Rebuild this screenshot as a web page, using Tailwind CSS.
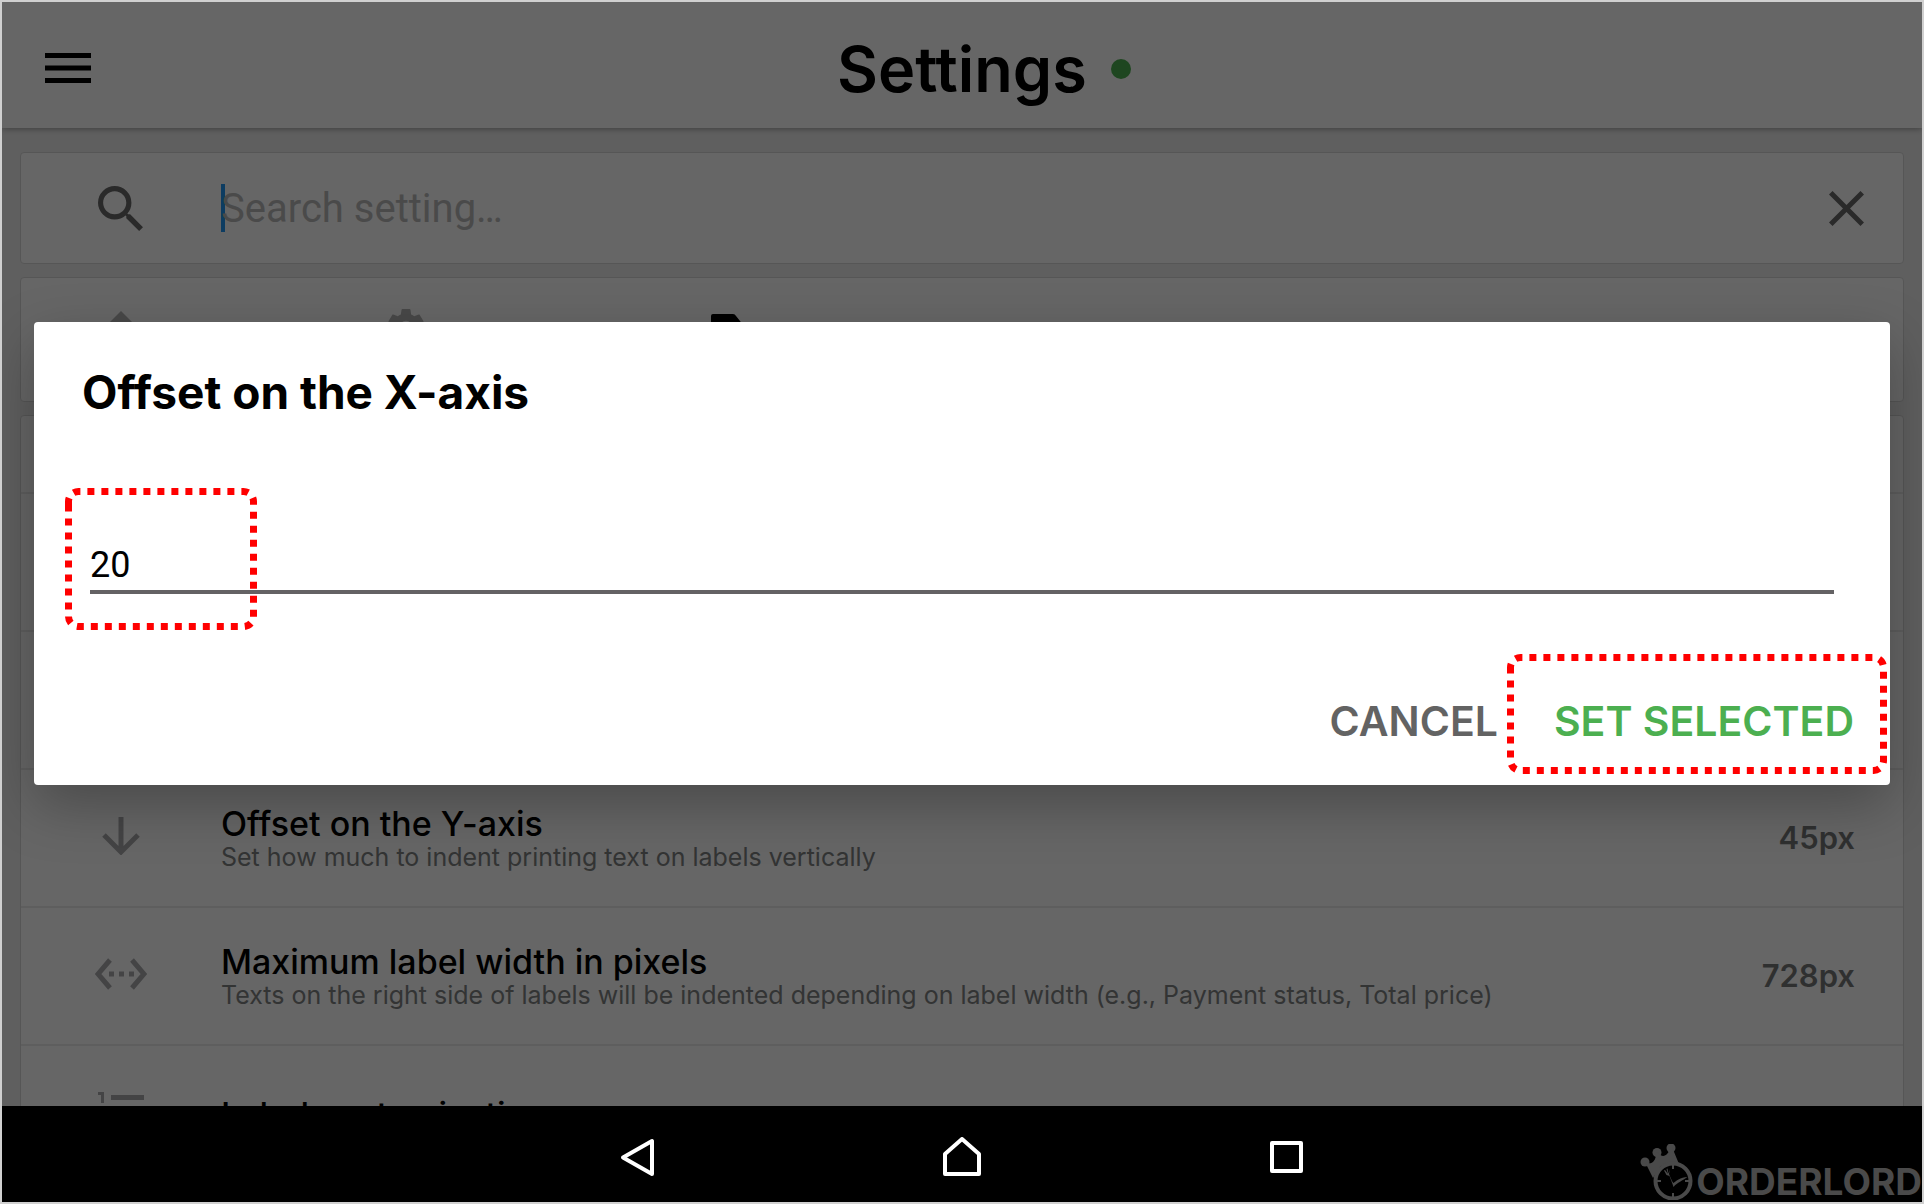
<!DOCTYPE html>
<html lang="en">
<head>
<meta charset="utf-8">
<meta name="viewport" content="width=device-width, initial-scale=1">
<title>Settings</title>
<script src="https://cdn.jsdelivr.net/npm/@tailwindcss/browser@4"></script>
</head>
<body class="font-['Inter',sans-serif]">
<div class="flex h-screen flex-col overflow-hidden border-2 border-[#d0d0d0] text-black">

  <!-- App screen with the dialog over it -->
  <div class="relative flex min-h-0 flex-1 flex-col overflow-hidden bg-[#eeeeee]">
    <header class="relative z-10 flex h-[126px] shrink-0 items-center justify-center bg-white shadow-[0_1px_6px_rgba(0,0,0,0.35)]">
      <button type="button" aria-label="Menu" class="absolute left-[43px] top-[51px]">
        <svg class="block h-[30px] w-[46px]" viewBox="0 0 46 30"><path d="M0 0h46v5H0zM0 12.500h46v5H0zM0 25h46v5H0z"/></svg>
      </button>
      <div class="flex items-center gap-6 pt-[7px] pl-11">
        <h1 class="text-[63px]/[72px] font-semibold">Settings</h1>
        <span class="size-5 rounded-full bg-[#4caf50]"></span>
      </div>
    </header>

    <main class="flex min-h-0 flex-1 flex-col gap-[13px] overflow-hidden px-[18px] pt-6">
      <label class="flex h-[112px] shrink-0 items-center rounded border border-[#d6d6d6] bg-white pr-[39px] pl-[77px]">
        <svg class="h-[45px] w-[45px] shrink-0" viewBox="3 3 17.500 17.500" fill="#696969"><path d="M15.500 14h-.79l-.28-.27A6.471 6.471 0 0 0 16 9.500 6.500 6.500 0 1 0 9.500 16c1.610 0 3.090-.59 4.230-1.570l.27.28v.79l5 4.990L20.490 19l-4.990-5zm-6 0C7.010 14 5 11.990 5 9.500S7.010 5 9.500 5 14 7.010 14 9.500 11.990 14 9.500 14z"/></svg>
        <span class="ml-[78px] h-12 w-1 shrink-0 bg-[#2196f3]"></span>
        <input type="text" aria-label="Search setting" placeholder="Search setting…" class="-ml-1 min-w-0 flex-1 pt-[2px] font-['Roboto',sans-serif] text-[40px]/[48px] placeholder:text-[#b9b9b9] focus:outline-none">
        <button type="button" aria-label="Clear"><svg class="block size-[35px]" viewBox="5 5 14 14" fill="#696969"><path d="M19 6.410 17.590 5 12 10.590 6.410 5 5 6.410 10.590 12 5 17.590 6.410 19 12 13.410 17.590 19 19 17.590 13.410 12z"/></svg></button>
      </label>

      <nav aria-label="Breadcrumb" class="flex h-[125px] shrink-0 items-start gap-[240px] rounded border border-[#d6d6d6] bg-white pt-7 pl-[73px]">
        <a href="#" aria-label="Home"><svg class="h-[60px] w-[54px]" viewBox="0 0 54 60" fill="#b4b4b4"><path d="M27 5 54 32H46V56H32V40H22V56H8V32H0z"/></svg></a>
        <a href="#" aria-label="General" class="pt-[3px]"><svg class="size-[36px]" viewBox="2 2 20 20" fill="#b4b4b4"><path d="M19.430 12.980c.04-.32.070-.64.070-.98s-.03-.66-.07-.98l2.110-1.650c.19-.15.240-.42.120-.64l-2-3.460c-.12-.22-.39-.3-.61-.22l-2.490 1c-.52-.4-1.080-.73-1.690-.98l-.38-2.650A.488.488 0 0 0 14 2h-4c-.25 0-.46.180-.49.420l-.38 2.650c-.61.250-1.170.590-1.690.980l-2.490-1c-.23-.09-.49 0-.61.220l-2 3.460c-.13.220-.07.490.120.640l2.110 1.650c-.04.320-.07.650-.07.980s.03.660.070.980l-2.110 1.650c-.19.150-.24.420-.12.640l2 3.460c.12.220.390.300.610.220l2.490-1c.52.400 1.080.730 1.690.980l.38 2.650c.03.240.240.420.490.420h4c.25 0 .46-.18.490-.42l.38-2.650c.61-.25 1.170-.59 1.690-.98l2.490 1c.23.090.490 0 .61-.22l2-3.460c.12-.22.070-.49-.12-.64zM12 15.500a3.500 3.500 0 1 1 0-7 3.500 3.500 0 0 1 0 7z"/></svg></a>
        <a href="#" aria-label="Label" class="pl-[47px]"><svg class="h-[60px] w-[46px]" viewBox="0 0 46 60"><path d="M2 8h20q2 0 3 2l16 20v28H2a2 2 0 0 1-2-2V10a2 2 0 0 1 2-2z"/></svg></a>
      </nav>

      <ul class="shrink-0 rounded border border-[#d6d6d6] bg-white">
        <li class="h-[78px] border-b-2 border-[#ececec]"></li>
        <li class="h-[138px] border-b-2 border-[#ececec]"></li>
        <li class="h-[138px] border-b-2 border-[#ececec]"></li>
        <li class="flex h-[138px] items-center border-b-2 border-[#ececec] pr-12">
          <span class="flex w-[200px] justify-center pb-1"><svg class="h-[38px] w-[38px]" viewBox="0 0 38 38" fill="none" stroke="#aaabad" stroke-width="5"><path d="M19 0v34M2 18l17 17 17-17"/></svg></span>
          <div class="flex-1">
            <h2 class="text-[34px]/[38px] font-medium">Offset on the Y-axis</h2>
            <p class="text-[25px]/[28px] text-[#808383]">Set how much to indent printing text on labels vertically</p>
          </div>
          <span class="text-[31px]/[38px] font-semibold text-[#777979]">45px</span>
        </li>
        <li class="flex h-[138px] items-center border-b-2 border-[#ececec] pr-12">
          <span class="flex w-[200px] justify-center pb-1"><svg class="h-[32px] w-[52px]" viewBox="0 0 52 32" fill="none" stroke="#aaabad" stroke-width="5"><path d="M15 2 3 16l12 14M37 2l12 14-12 14"/><path d="M14 16h25" stroke-dasharray="5 5"/></svg></span>
          <div class="flex-1">
            <h2 class="text-[34px]/[38px] font-medium">Maximum label width in pixels</h2>
            <p class="text-[25px]/[28px] text-[#808383]">Texts on the right side of labels will be indented depending on label width (e.g., Payment status, Total price)</p>
          </div>
          <span class="text-[31px]/[38px] font-semibold text-[#777979]">728px</span>
        </li>
        <li class="flex h-[138px] items-center pr-12">
          <span class="flex w-[200px] justify-center pb-1"><svg class="h-[42px] w-[46px]" viewBox="0 0 46 42" fill="#aaabad"><path d="M0 0h6v11H3V3H0zM13 3h33v5H13zM13 18h33v5H13zM13 33h33v5H13z"/></svg></span>
          <h2 class="flex-1 text-[34px]/[38px] font-medium">Label customization</h2>
        </li>
      </ul>
    </main>

    <!-- Scrim and dialog -->
    <div class="absolute inset-0 z-20 flex items-center bg-black/60 px-8 pb-[2px]">
      <section role="dialog" aria-labelledby="dialog-title" class="relative flex w-full flex-col rounded bg-white shadow-[0_20px_56px_rgba(0,0,0,0.28)]">
        <h2 id="dialog-title" class="px-12 pt-[42px] text-[46px]/[56px] font-bold">Offset on the X-axis</h2>
        <div class="mt-[114px] pr-14 pl-14">
          <input type="text" aria-labelledby="dialog-title" value="20" class="block h-[60px] w-full border-b-4 border-[#646264] pt-[6px] font-['Roboto',sans-serif] text-[36px]/[50px] focus:outline-none">
        </div>
        <div class="flex justify-end gap-14 pt-[100px] pr-9 pb-9 text-[41px]/[55px] font-semibold">
          <button type="button" class="text-[#636363]">CANCEL</button>
          <button type="button" class="text-[#4caf50]">SET SELECTED</button>
        </div>
        <!-- Dotted highlights -->
        <svg class="pointer-events-none absolute top-[166px] left-[31px] h-[142px] w-[192px]" viewBox="0 0 192 142" fill="none" stroke="#ff0000" stroke-width="7" stroke-dasharray="7 7"><path d="M3.500 17V13.500a10 10 0 0 1 10-10h165a10 10 0 0 1 10 10v115a10 10 0 0 1-10 10h-165a10 10 0 0 1-10-10z"/></svg>
        <svg class="pointer-events-none absolute right-[3px] bottom-[11px] h-[120px] w-[380px]" viewBox="0 0 380 120" fill="none" stroke="#ff0000" stroke-width="7" stroke-dasharray="7 7"><path d="M3.500 17V13.500a10 10 0 0 1 10-10h353a10 10 0 0 1 10 10v93a10 10 0 0 1-10 10h-353a10 10 0 0 1-10-10z"/></svg>
      </section>
    </div>
  </div>

  <!-- System navigation bar -->
  <footer class="relative flex h-24 shrink-0 items-center justify-center bg-black pt-[6px]">
    <div class="flex items-center gap-[286px]">
      <button type="button" aria-label="Back"><svg class="block size-[40px]" viewBox="0 0 40 40" fill="none" stroke="#fff" stroke-width="4" stroke-linejoin="round"><path d="M36 4v33L7 20.500z"/></svg></button>
      <button type="button" aria-label="Home"><svg class="block size-[40px]" viewBox="0 0 40 40" fill="none" stroke="#fff" stroke-width="4" stroke-linejoin="round"><path d="M20 2 37 17v20H3V17z"/></svg></button>
      <button type="button" aria-label="Recent apps"><svg class="block size-[40px]" viewBox="0 0 40 40" fill="none" stroke="#fff" stroke-width="4" stroke-linejoin="round"><path d="M4 6h29v28H4z"/></svg></button>
    </div>
    <div class="absolute right-0 bottom-0 flex items-end gap-[2px] text-[#4a4a4a]">
      <svg class="mb-[2px] h-[56px] w-[54px]" viewBox="0 0 54 56" fill="currentColor"><circle cx="5" cy="18" r="4.500"/><circle cx="17" cy="8.500" r="4.500"/><circle cx="31" cy="4" r="4.500"/><path d="M5 18c5 3 11 1 11-9l2-1c4 7 10 4 12-4l2-1 7 17-18 2-8 12z"/><circle cx="33" cy="37" r="17.500" fill="#000" stroke="currentColor" stroke-width="4"/><path d="M33 20v5M33 49v5M16 37h5M45 37h5" stroke="currentColor" stroke-width="2"/><path d="m34 40-2-3-3-7 1-5-1.500 4.500-1-5-1 .5 1.500 5-3-4-1 .5 2.500 4.500 3 1 3 8 1 3c4-5 9-6 14-10-7 0-12 4-15 7z"/></svg>
      <span class="text-[37px]/[40px] font-bold">ORDERLORD</span>
    </div>
  </footer>
</div>
</body>
</html>
